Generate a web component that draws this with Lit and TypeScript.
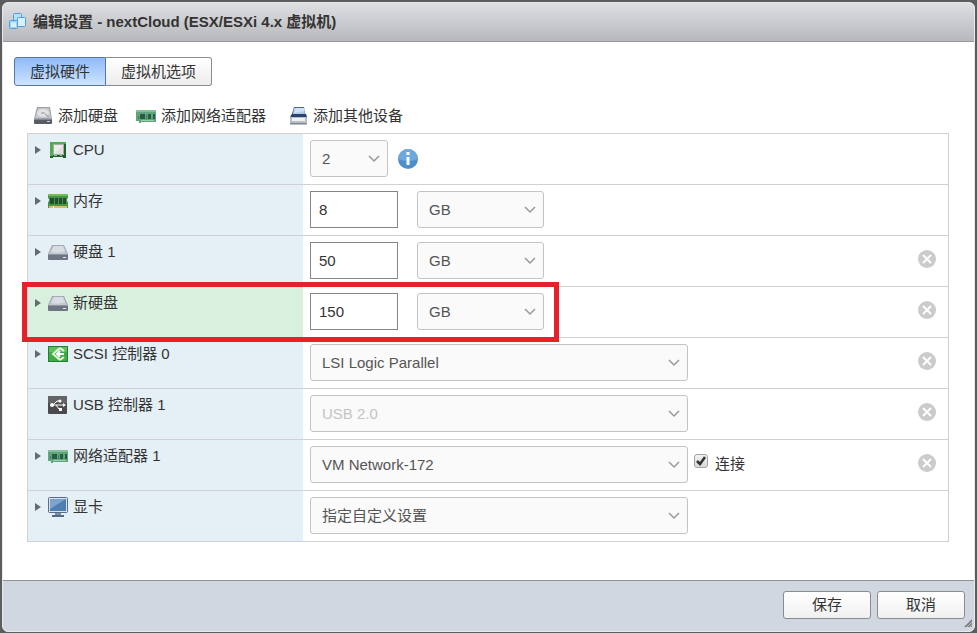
import { LitElement, html, css, svg, nothing } from "lit";
import { customElement, property, state } from "lit/decorators.js";
import { classMap } from "lit/directives/class-map.js";

const icons: Record<string, unknown> = {
  vm: svg`
    <g stroke="#4f9fdb">
      <rect x="5.500" y="1.500" width="8" height="8" rx="1" fill="#b5dffa"/>
      <rect x="9.500" y="5.500" width="8" height="9" rx="1" fill="#d8f0fd"/>
      <rect x="1.500" y="8.500" width="8" height="8" rx="1" fill="#a2d6f8"/>
      <path d="M3 10.500h5v4.500H3z" fill="#d5effd" stroke="none"/>
    </g>`,
  disk: svg`
    <path d="M4 3h12l4 9H0z" fill="#a4a9b4"/>
    <path d="M5 4h10l4 8H1z" fill="#c3c7d0"/>
    <path d="M6 4h9l2 5c-4 2-9 2-14 1z" fill="#d9dce3"/>
    <path d="M0 12h20v5q0 1-1 1H1q-1 0-1-1z" fill="#6e7685"/>
    <path d="M0 12h20v1H0z" fill="#9097a4"/>
    <path d="M15 15h3v1h-3z" fill="#dfe4ec"/>`,
  addDisk: svg`
    <path d="M4 1h13l2 12H1z" fill="#9da0a5"/>
    <path d="M5 2h11l2 10H2z" fill="#c5c7ca"/>
    <ellipse cx="10" cy="7" rx="6" ry="4" fill="#e1e2e4"/>
    <ellipse cx="10" cy="7" rx="2" ry="1" fill="#aeb1b6"/>
    <path d="M12 8l4 3" stroke="#8d9197"/>
    <path d="M1 13h18v4q0 1-1 1H2q-1 0-1-1z" fill="#565b65"/>
    <path d="M1 13h18v1H1z" fill="#848a94"/>
    <path d="M14 15h3v1h-3z" fill="#c9d0da"/>`,
  nic: svg`
    <path d="M0 4h20v12H5v1H3v-2H0z" fill="#5fa57c"/>
    <path d="M0 4h20v2H0z" fill="#86bf9b"/>
    <path d="M4 8h5v5H4zM12 8h3v5h-3zM17 8h2v5h-2z" fill="#2c5a44"/>
    <path d="M2 10h1v3H2zM10 9h1v4h-1z" fill="#3f7d5c"/>
    <path d="M5 14h13v1H5z" fill="#9ccfae"/>`,
  device: svg`
    <path d="M6 1h10l2 10H3z" fill="#46678f"/>
    <path d="M6 2h10l1 6H5z" fill="#b4cae2"/>
    <path d="M8 2h8l1 3-11 2z" fill="#d3e1f0"/>
    <path d="M4 8h14l1 3H2z" fill="#27446f"/>
    <path d="M2 11h17v7q0 1-1 1H3q-1 0-1-1z" fill="#b9bec7"/>
    <path d="M4 12h13v3H4z" fill="#eff1f4"/>
    <path d="M2 17h17v1H2z" fill="#7e8590"/>`,
  cpu: svg`
    <path d="M2 2h16v16h-3v-1H5v1H2z" fill="#1e6429"/>
    <path d="M2 2h16v2H2zM2 2h3v14H2z" fill="#4fae50"/>
    <path d="M5 4h11v11h-2v1h-2v-1H9v1H6v-1H5z" fill="#a5ada6"/>
    <path d="M6 5h9v9H6z" fill="#dfe0e0"/>
    <path d="M6 5h9L6 14z" fill="#ececec"/>`,
  memory: svg`
    <path d="M0 3h20v4l-1 1v2l1 1v6H0v-6l1-1V8L0 7z" fill="#46953f"/>
    <path d="M0 3h20v2H0z" fill="#76ba62"/>
    <path d="M2 7h4v6H2zM7 7h3v6H7zM11 7h3v6h-3zM15 7h3v6h-3z" fill="#244e2a"/>
    <path d="M1 15h18v2H1z" fill="#c9c568"/>
    <path d="M5 15h1v2H5z" fill="#fff"/>`,
  scsi: svg`
    <rect x="0.500" y="2.500" width="19" height="15" fill="#3eac44" stroke="#23802e"/>
    <path d="M1 3h18v5H1z" fill="#5cbf5d"/>
    <path d="M12 4l-7 6 7 6M12 4l4 3M12 16l4-3" fill="none" stroke="#e6f8e3" stroke-width="2"/>
    <path d="M9 10h7M12 7l-3 3 3 3" fill="none" stroke="#fff" stroke-width="2"/>`,
  usb: svg`
    <rect x="0" y="1" width="19" height="18" rx="1" fill="#4b4b4d"/>
    <path d="M0 1h19v7H0z" fill="#636365"/>
    <path d="M3 10h13M5 10l4-4h3M8 10l3 4h2" fill="none" stroke="#fff"/>
    <circle cx="4" cy="10" r="2" fill="#fff"/>
    <path d="M15 8l3 2-3 2z" fill="#fff"/>
    <circle cx="12" cy="6" r="1.500" fill="#fff"/>
    <path d="M11 13h3v3h-3z" fill="#fff"/>`,
  display: svg`
    <rect x="0.500" y="0.500" width="19" height="15" rx="1" fill="#dbe2ea" stroke="#566d8c"/>
    <path d="M2 2h16v12H2z" fill="#4f7eb1"/>
    <path d="M2 2h16L2 12z" fill="#7ba3cd"/>
    <path d="M7 16h6v2H7z" fill="#7c8da3"/>
    <path d="M4 18h12v2H4z" fill="#536a88"/>`,
};

const sheet = css`
  * { box-sizing: border-box; }
  button, input, select {
    margin: 0;
    font: inherit;
    color: inherit;
  }
  svg { display: block; flex: none; }
`;

@customElement("hw-icon")
class HwIcon extends LitElement {
  @property() name = "disk";
  static styles = css`
    :host { display: block; flex: none; width: 20px; height: 20px; }
    svg { display: block; }
  `;
  render() {
    return html`<svg width="20" height="20" viewBox="0 0 20 20" aria-hidden="true">${icons[this.name]}</svg>`;
  }
}

interface Size { kind: "size"; value: string }
interface Choice { kind: "select"; value: string; short?: boolean; disabled?: boolean }
interface Device {
  id: string;
  label: string;
  icon: string;
  control: Size | Choice;
  expandable: boolean;
  removable: boolean;
  fresh?: boolean;
  info?: boolean;
  connect?: boolean;
}

const devices: Device[] = [
  { id: "cpu", label: "CPU", icon: "cpu", control: { kind: "select", value: "2", short: true }, expandable: true, removable: false, info: true },
  { id: "memory", label: "内存", icon: "memory", control: { kind: "size", value: "8" }, expandable: true, removable: false },
  { id: "disk1", label: "硬盘 1", icon: "disk", control: { kind: "size", value: "50" }, expandable: true, removable: true },
  { id: "disk2", label: "新硬盘", icon: "disk", control: { kind: "size", value: "150" }, expandable: true, removable: true, fresh: true },
  { id: "scsi", label: "SCSI 控制器 0", icon: "scsi", control: { kind: "select", value: "LSI Logic Parallel" }, expandable: true, removable: true },
  { id: "usb", label: "USB 控制器 1", icon: "usb", control: { kind: "select", value: "USB 2.0", disabled: true }, expandable: false, removable: true },
  { id: "nic", label: "网络适配器 1", icon: "nic", control: { kind: "select", value: "VM Network-172" }, expandable: true, removable: true, connect: true },
  { id: "video", label: "显卡", icon: "display", control: { kind: "select", value: "指定自定义设置" }, expandable: true, removable: false },
];

@customElement("app-root")
class AppRoot extends LitElement {
  @state() private tab = 0;

  static styles = [sheet, css`
    :host {
      display: flex;
      min-height: 100vh;
      box-sizing: border-box;
      padding: 2px 2px 1px;
      background: #5c5d5f;
      color: #333;
      font: 15px/20px "Liberation Sans", "Noto Sans CJK SC", sans-serif;
    }
    .dialog {
      position: relative;
      flex: 1;
      min-width: 0;
      display: flex;
      flex-direction: column;
      overflow: hidden;
      border: 1px solid #e8e9ea;
      border-radius: 6px;
      background: #fff;
    }
    .title {
      display: flex;
      align-items: center;
      gap: 5px;
      height: 39px;
      padding: 0 5px;
      border-bottom: 1px solid #97989b;
      background: linear-gradient(#dedfe2, #b7b8bb);
    }
    h1 { margin: 0; font-size: 15px; line-height: 20px; }
    .content { flex: 1; padding: 15px 25px 20px 11px; }
    .tabs { display: flex; }
    .tab {
      height: 29px;
      padding: 0 15px;
      border: 1px solid #8b8c8f;
      border-radius: 0 3px 3px 0;
      background: linear-gradient(#fff, #ececed);
    }
    .tab:first-child { border-radius: 3px 0 0 3px; }
    .tab + .tab { border-left: 0; }
    .tab.on {
      border-color: #56779f;
      background: linear-gradient(#8fbaf8, #cde4ff);
    }
    .tools { display: flex; gap: 18px; padding: 20px 0 7px 19px; }
    .tool {
      display: flex;
      align-items: center;
      gap: 5px;
      padding: 0;
      border: 0;
      background: none;
    }
    .tool:last-child { margin-left: 4px; }
    .list { margin-left: 13px; border: 1px solid #cfd2d5; border-bottom: 0; }
    .row {
      position: relative;
      display: grid;
      grid-template-columns: 275px 1fr;
      border-bottom: 1px solid #cfd2d5;
    }
    .name {
      display: flex;
      align-items: flex-start;
      gap: 5px;
      padding: 6px 7px;
      background: #e4eff6;
    }
    .fresh .name { background: #d9f0df; }
    .expand, .indent { width: 8px; height: 20px; flex: none; }
    .expand {
      display: flex;
      align-items: center;
      padding: 0;
      border: 0;
      background: none;
      color: #666a6e;
    }
    .field {
      display: flex;
      align-items: center;
      padding: 6px 12px 7px 7px;
    }
    .pick { display: grid; align-items: center; width: 378px; color: #555; }
    .pick.short { width: 78px; }
    .pick.unit { width: 127px; margin-left: 19px; }
    .pick select, .pick svg { grid-area: 1 / 1; }
    .pick svg { justify-self: end; margin-right: 8px; pointer-events: none; }
    select {
      appearance: none;
      width: 100%;
      height: 37px;
      padding: 0 24px 0 11px;
      border: 1px solid #c4c4c4;
      border-radius: 3px;
      background: #fafafa;
    }
    select:disabled { color: #c4c4c4; opacity: 1; }
    .size {
      width: 88px;
      height: 37px;
      padding: 0 8px;
      border: 1px solid #85868a;
      border-radius: 0;
      background: #fff;
    }
    .info, .remove { padding: 0; border: 0; background: none; }
    .info { margin-left: 10px; }
    .remove { align-self: flex-start; margin: 8px 0 0 auto; }
    .connect {
      display: flex;
      align-items: flex-start;
      gap: 7px;
      margin-left: 6px;
      align-self: flex-start;
      padding-top: 8px;
    }
    .check { display: grid; }
    .check input, .check svg { grid-area: 1 / 1; }
    .check svg { pointer-events: none; visibility: hidden; }
    .check input:checked + svg { visibility: visible; }
    .check input {
      appearance: none;
      width: 14px;
      height: 14px;
      border: 1px solid #a2a3a5;
      border-radius: 3px;
      background: linear-gradient(#f2f2f2, #d9d9d9);
    }
    .mark {
      position: absolute;
      inset: -5px auto -5px -6px;
      width: 537px;
      border: 5px solid #e62129;
      z-index: 1;
      pointer-events: none;
    }
    .foot {
      display: flex;
      justify-content: flex-end;
      gap: 6px;
      padding: 10px 9px 12px;
      border-top: 1px solid #8f9297;
      background: #d0d7e0;
    }
    .action {
      width: 88px;
      height: 28px;
      padding: 0;
      border: 1px solid #8b8c8f;
      border-radius: 3px;
      background: linear-gradient(#fff, #f0f0f0);
    }
    .grip { position: absolute; right: 2px; bottom: 4px; }
  `];

  private pick(id: string, value: string, kind: string, label: string, disabled = false) {
    return html`<span class="pick ${kind}">
      <select id=${id} aria-label=${label} ?disabled=${disabled}><option>${value}</option></select>
      <svg width="12" height="8" viewBox="0 0 12 8" aria-hidden="true"><path d="M1 1l5 5 5-5" fill="none" stroke="#999" stroke-width="1.500"/></svg>
    </span>`;
  }

  private field(d: Device) {
    const c = d.control;
    return c.kind === "size"
      ? html`<input class="size" id=${d.id} .value=${c.value}>${this.pick(d.id + "-unit", "GB", "unit", d.label + " GB")}`
      : this.pick(d.id, c.value, c.short ? "short" : "", d.label, c.disabled);
  }

  private row(d: Device) {
    return html`<div class=${classMap({ row: true, fresh: !!d.fresh })}>
      <div class="name">
        ${d.expandable
          ? html`<button class="expand" aria-label=${d.label}><svg width="6" height="8" viewBox="0 0 6 8"><path d="M0 0l6 4-6 4z" fill="currentColor"/></svg></button>`
          : html`<span class="indent"></span>`}
        <hw-icon name=${d.icon}></hw-icon>
        <label for=${d.id}>${d.label}</label>
      </div>
      <div class="field">
        ${this.field(d)}
        ${d.info ? html`<button class="info" aria-label="CPU">
          <svg width="20" height="20" viewBox="0 0 20 20">
            <circle cx="10" cy="10" r="10" fill="#4e8ecb"/><path d="M0 10a10 10 0 0 1 20 0q-10 4-20 0z" fill="#6fa8dc"/>
            <path d="M8.500 3h3v3h-3zM8.500 8h3v8h-3z" fill="#fff"/>
          </svg></button>` : nothing}
        ${d.connect ? html`<label class="connect"><span class="check"><input type="checkbox" checked>
          <svg width="14" height="14" viewBox="0 0 14 14"><path d="M3 7l3 3 5-7" fill="none" stroke="#333" stroke-width="2.500"/></svg></span>连接</label>` : nothing}
        ${d.removable ? html`<button class="remove" aria-label=${d.label}>
          <svg width="18" height="18" viewBox="0 0 18 18"><circle cx="9" cy="9" r="9" fill="#cbcbcb"/><path d="M5 5l8 8M13 5l-8 8" stroke="#fff" stroke-width="2"/></svg></button>` : nothing}
      </div>
      ${d.fresh ? html`<div class="mark"></div>` : nothing}
    </div>`;
  }

  render() {
    return html`<section class="dialog" role="dialog" aria-labelledby="title">
      <header class="title"><hw-icon name="vm"></hw-icon><h1 id="title">编辑设置 - nextCloud (ESX/ESXi 4.x 虚拟机)</h1></header>
      <main class="content">
        <div class="tabs" role="tablist">
          ${["虚拟硬件", "虚拟机选项"].map((t, i) => html`<button role="tab" aria-selected=${this.tab === i}
            class=${classMap({ tab: true, on: this.tab === i })} @click=${() => { this.tab = i; }}>${t}</button>`)}
        </div>
        <div class="tools">
          ${[["addDisk", "添加硬盘"], ["nic", "添加网络适配器"], ["device", "添加其他设备"]].map(([icon, text]) =>
            html`<button class="tool"><hw-icon name=${icon}></hw-icon>${text}</button>`)}
        </div>
        <div class="list">${devices.map((d) => this.row(d))}</div>
      </main>
      <footer class="foot"><button class="action">保存</button><button class="action">取消</button></footer>
      <svg class="grip" width="8" height="8" viewBox="0 0 8 8" aria-hidden="true"><path d="M8 0v8H0z" fill="#7c8085"/><path d="M3 8l5-5M6 8l2-2" stroke="#bcc1c8"/></svg>
    </section>`;
  }
}
